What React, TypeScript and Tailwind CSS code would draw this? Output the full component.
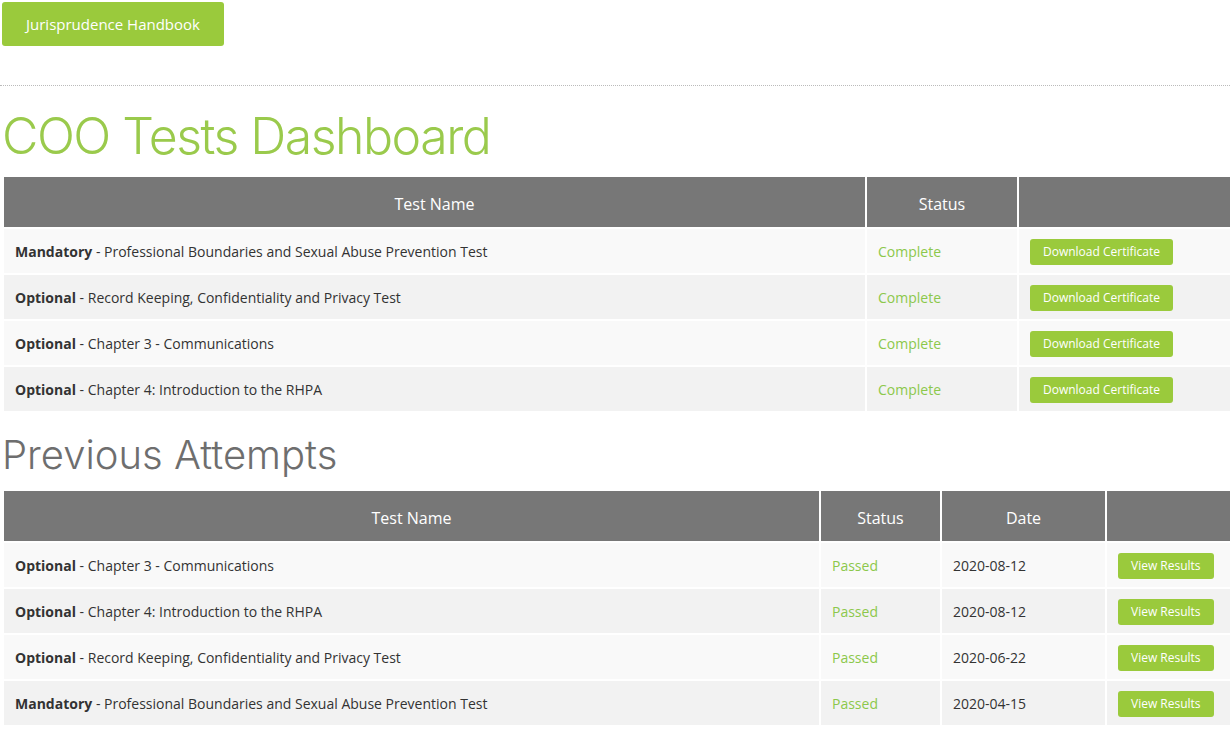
const green = "bg-[#9aca3c]";

type Row1 = { kind: string; name: string };
const tests: Row1[] = [
  { kind: "Mandatory", name: "Professional Boundaries and Sexual Abuse Prevention Test" },
  { kind: "Optional", name: "Record Keeping, Confidentiality and Privacy Test" },
  { kind: "Optional", name: "Chapter 3 - Communications" },
  { kind: "Optional", name: "Chapter 4: Introduction to the RHPA" },
];

const attempts = [
  { kind: "Optional", name: "Chapter 3 - Communications", date: "2020-08-12" },
  { kind: "Optional", name: "Chapter 4: Introduction to the RHPA", date: "2020-08-12" },
  { kind: "Optional", name: "Record Keeping, Confidentiality and Privacy Test", date: "2020-06-22" },
  { kind: "Mandatory", name: "Professional Boundaries and Sexual Abuse Prevention Test", date: "2020-04-15" },
];

function SmallButton({ label }: { label: string }) {
  return (
    <button className="h-[26px] rounded-[3px] bg-[#9aca3c] px-[13px] text-[12px] text-white">
      {label}
    </button>
  );
}

function Th({ children, className = "" }: { children?: React.ReactNode; className?: string }) {
  return (
    <th className={`h-[50px] bg-[#777777] pt-[3px] text-center text-[16px] font-normal text-white ${className}`}>
      {children}
    </th>
  );
}

export default function App() {
  return (
    <div className="min-h-screen overflow-hidden bg-white font-['Open_Sans',sans-serif] text-[#333]">
      <div className="pl-[2px] pt-[2px]">
        <button className={`h-[44px] w-[222px] rounded-[3px] ${green} text-[15px] text-white`}>
          Jurisprudence Handbook
        </button>
      </div>
      <div className="mt-[39px] border-t border-dotted border-[#bbb]" />
      <h1 className="ml-[2px] mt-[20px] font-['Inter',sans-serif] text-[50px] leading-[60px] font-light tracking-[-1.5px] text-[#9aca4c]">
        COO Tests Dashboard
      </h1>
      <table className="ml-[2px] mt-[9px] w-[1230px] border-separate border-spacing-[2px]">
        <thead>
          <tr>
            <Th>Test Name</Th>
            <Th className="w-[150px]">Status</Th>
            <Th className="w-[211px]" />
          </tr>
        </thead>
        <tbody>
          {tests.map((t, i) => (
            <tr key={i} className={i % 2 === 0 ? "bg-[#f9f9f9]" : "bg-[#f2f2f2]"}>
              <td className="h-[44px] pl-[11px] text-[14px]">
                <b className="font-bold">{t.kind}</b> - {t.name}
              </td>
              <td className="pl-[11px] text-[14px] text-[#8cc84b]">Complete</td>
              <td className="pl-[11px]">
                <SmallButton label="Download Certificate" />
              </td>
            </tr>
          ))}
        </tbody>
      </table>
      <h2 className="ml-[2px] mt-[18px] font-['Inter',sans-serif] text-[40px] leading-[48px] font-light text-[#6e6e6e]">
        Previous Attempts
      </h2>
      <table className="ml-[2px] mt-[10px] w-[1230px] border-separate border-spacing-[2px]">
        <thead>
          <tr>
            <Th>Test Name</Th>
            <Th className="w-[119px]">Status</Th>
            <Th className="w-[163px]">Date</Th>
            <Th className="w-[123px]" />
          </tr>
        </thead>
        <tbody>
          {attempts.map((t, i) => (
            <tr key={i} className={i % 2 === 0 ? "bg-[#f9f9f9]" : "bg-[#f2f2f2]"}>
              <td className="h-[44px] pl-[11px] text-[14px]">
                <b className="font-bold">{t.kind}</b> - {t.name}
              </td>
              <td className="pl-[11px] text-[14px] text-[#8cc84b]">Passed</td>
              <td className="pl-[11px] text-[14px]">{t.date}</td>
              <td className="pl-[11px]">
                <SmallButton label="View Results" />
              </td>
            </tr>
          ))}
        </tbody>
      </table>
    </div>
  );
}
